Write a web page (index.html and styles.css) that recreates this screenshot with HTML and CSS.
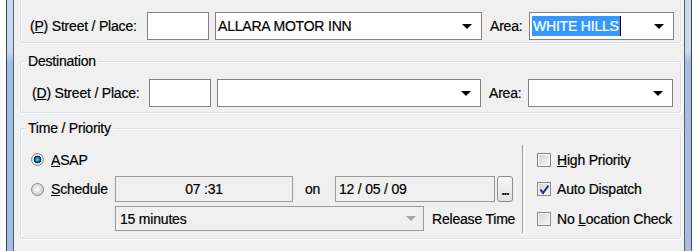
FILE: index.html
```html
<!doctype html>
<html lang="en">
<head>
  <meta charset="utf-8">
  <title>Call Entry</title>
  <link rel="stylesheet" href="styles.css">
</head>
<body>
<div class="frame">
<div class="client">

<div class="group pickup">
  <div class="row">
    <span class="lbl street">(<u>P</u>) Street / Place:</span>
    <span class="box num"></span>
    <span class="box place">ALLARA MOTOR INN<i class="arrow"></i></span>
    <span class="lbl area">Area:</span>
    <span class="box areabox"><span class="sel">WHITE HILLS</span><span class="caret"></span><i class="arrow"></i></span>
  </div>
</div>

<fieldset class="group dest">
  <legend>Destination</legend>
  <div class="row">
    <span class="lbl street">(<u>D</u>) Street / Place:</span>
    <span class="box num"></span>
    <span class="box place"><i class="arrow"></i></span>
    <span class="lbl area">Area:</span>
    <span class="box areabox"><i class="arrow"></i></span>
  </div>
</fieldset>

<fieldset class="group time">
  <legend>Time / Priority</legend>
  <div class="timecols">
    <div class="sched">
      <div class="trow">
        <span class="opt"><span class="radio checked"></span><span><u>A</u>SAP</span></span>
      </div>
      <div class="trow mid">
        <span class="opt"><span class="radio"></span><span><u>S</u>chedule</span></span>
        <span class="box dis timebox">07 :31</span>
        <span class="ontxt">on</span>
        <span class="box dis datebox">12 / 05 / 09</span>
        <span class="dots">...</span>
      </div>
      <div class="trow">
        <span class="box dis relbox">15 minutes<i class="arrow dim"></i></span>
        <span class="reltxt">Release Time</span>
      </div>
    </div>
    <div class="sep"></div>
    <div class="checks">
      <div class="crow"><span class="check"></span><span><u>H</u>igh Priority</span></div>
      <div class="crow mid"><span class="check">
        <svg width="11" height="11" viewBox="0 0 11 11"><path d="M1.5 5.5 L4 9 L9.5 1.5" fill="none" stroke="#1c2f7a" stroke-width="2"/></svg>
      </span><span>Auto Dispatch</span></div>
      <div class="crow"><span class="check"></span><span>No <u>L</u>ocation Check</span></div>
    </div>
  </div>
</fieldset>

</div>
</div>
</body>
</html>
```

FILE: styles.css
```css
body {
  margin: 0;
  background: #fff;
  font: 14px "Liberation Sans", Arial, sans-serif;
  letter-spacing: -0.2px;
  -webkit-text-stroke: 0.2px #000;
  color: #000;
  overflow: hidden;
}

/* window frame */
.frame {
  margin-left: 6px;
  width: 672px;
  height: 251px;
  padding: 0 6px;
  background: linear-gradient(#c9d9eb 0, #c9d9eb 52px, #a4bee2 62px, #a4bee2 100%);
  border-left: 1px solid #3e4650;
  border-right: 1px solid #3e4650;
}
.client {
  height: 100%;
  box-sizing: border-box;
  background: #f0f0f0;
  border-left: 1px solid #56606c;
  border-right: 1px solid #56606c;
  padding: 0 3px 0 6px;
  overflow: hidden;
}

/* group boxes */
.group {
  margin: 0;
  border: 1px solid #d5dfe5;
  border-radius: 3px;
  box-shadow: inset 1px 1px 0 #fff, 1px 1px 0 #fff;
  padding: 0 0 0 9px;
  min-width: 0;
}
.group legend {
  padding: 0 2px;
  margin-left: -4px;
  line-height: 16px;
}
.pickup {
  margin-top: -10px;
  padding-top: 21px;
  padding-bottom: 2px;
}
.dest {
  margin-top: 10px;
  padding-top: 10px;
  padding-bottom: 5px;
}
.time {
  margin-top: 7px;
  padding-top: 9px;
  padding-bottom: 5px;
}

.row {
  display: flex;
  align-items: center;
  height: 28px;
}
.dest .row { padding-left: 2px; }
.lbl { white-space: nowrap; }
.street { width: 117px; }
.area { width: 39px; margin-left: 8px; }

/* edit and combo boxes */
.box {
  box-sizing: border-box;
  display: flex;
  align-items: center;
  height: 28px;
  border: 1px solid #828282;
  background: #fff;
  padding-left: 2px;
  white-space: nowrap;
}
.num { width: 62px; margin-right: 6px; }
.place { width: 267px; }
.dest .place { width: 264px; }
.areabox { width: 145px; }
.arrow {
  margin-left: auto;
  margin-right: 9px;
  border-top: 5px solid #000;
  border-left: 5px solid transparent;
  border-right: 5px solid transparent;
}
.arrow.dim {
  border-top-color: #a8a8a8;
  margin-right: 7px;
}
.sel {
  background: #3399ff;
  color: #fff;
  -webkit-text-stroke: 0.2px #fff;
  line-height: 20px;
  padding: 0 1px;
}
.caret {
  width: 1px;
  height: 20px;
  background: #000;
}

/* time / priority */
.timecols {
  display: flex;
  height: 88px;
}
.sched { width: 492px; }
.trow {
  display: flex;
  align-items: center;
  height: 29px;
}
.trow.mid { height: 30px; }
.opt {
  display: flex;
  align-items: center;
  width: 85px;
  white-space: nowrap;
}
.radio {
  box-sizing: border-box;
  flex: none;
  width: 13px;
  height: 13px;
  margin: 0 7px 0 1px;
  border: 1px solid #8a8a8a;
  border-radius: 50%;
  background: radial-gradient(circle at 45% 45%, #fdfdfd 0, #e6e6e6 3px, #cfcfcf 6px);
}
.radio.checked {
  background: radial-gradient(circle, #5cc6f2 0, #1d87c4 2px, #16324f 3px, #16324f 3.6px, #f2f2f2 4.2px, #dadada 6px);
}
.dis {
  background: #f0f0f0;
  border-color: #9a9a9a;
}
.timebox {
  width: 178px;
  height: 26px;
  justify-content: center;
  padding-left: 0;
}
.ontxt {
  width: 42px;
  padding-left: 12px;
  box-sizing: border-box;
}
.datebox {
  width: 160px;
  height: 26px;
  padding-left: 3px;
}
.dots {
  box-sizing: border-box;
  width: 16px;
  height: 26px;
  margin-left: 2px;
  border: 1px solid #8e8e8e;
  border-radius: 3px;
  background: linear-gradient(#f6f6f6, #e2e2e2);
  font-size: 12px;
  font-weight: bold;
  letter-spacing: -1px;
  line-height: 16px;
  display: flex;
  align-items: flex-end;
  justify-content: center;
  padding-bottom: 2px;
}
.relbox {
  width: 309px;
  height: 25px;
  margin-left: 85px;
  padding-left: 4px;
}
.reltxt { margin-left: 8px; }

.sep {
  width: 1px;
  border-left: 1px solid #a0a0a0;
  border-right: 1px solid #fff;
}
.checks { margin-left: 12px; }
.crow {
  display: flex;
  align-items: center;
  height: 29px;
  white-space: nowrap;
}
.crow.mid { height: 30px; }
.check {
  box-sizing: border-box;
  flex: none;
  display: flex;
  align-items: center;
  justify-content: center;
  width: 14px;
  height: 14px;
  margin-right: 6px;
  border: 1px solid #8a8a8a;
  background: linear-gradient(135deg, #d2d2d2, #f8f8f8);
  box-shadow: inset 0 0 0 1px #f4f4f4;
}
```
